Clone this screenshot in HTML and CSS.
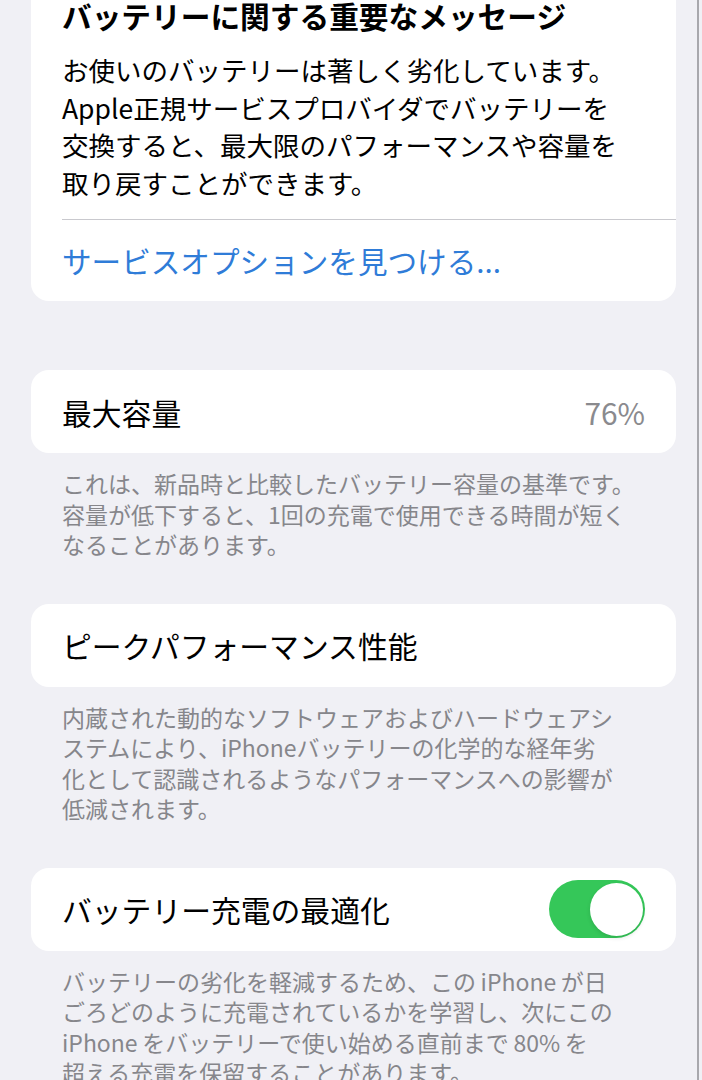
FILE: index.html
```html
<!DOCTYPE html>
<html lang="ja">
<head>
  <meta charset="utf-8">
  <title>バッテリーの状態と充電</title>
  <link rel="stylesheet" href="styles.css">
</head>
<body>
  <div class="screen">
    <div class="card message">
      <h2 class="message-title">バッテリーに関する重要なメッセージ</h2>
      <p class="message-body">お使いのバッテリーは著しく劣化しています。<br>Apple正規サービスプロバイダでバッテリーを<br>交換すると、最大限のパフォーマンスや容量を<br>取り戻すことができます。</p>
      <div class="divider"></div>
      <a class="message-link" href="#">サービスオプションを見つける...</a>
    </div>

    <div class="card row">
      <span class="row-label">最大容量</span>
      <span class="row-value">76%</span>
    </div>
    <p class="footer">これは、新品時と比較したバッテリー容量の基準です。<br>容量が低下すると、1回の充電で使用できる時間が短く<br>なることがあります。</p>

    <div class="card row">
      <span class="row-label">ピークパフォーマンス性能</span>
    </div>
    <p class="footer">内蔵された動的なソフトウェアおよびハードウェアシ<br>ステムにより、iPhoneバッテリーの化学的な経年劣<br>化として認識されるようなパフォーマンスへの影響が<br>低減されます。</p>

    <div class="card row">
      <span class="row-label">バッテリー充電の最適化</span>
      <span class="toggle on"><span class="knob"></span></span>
    </div>
    <p class="footer">バッテリーの劣化を軽減するため、この&thinsp;iPhone&thinsp;が日<br>ごろどのように充電されているかを学習し、次にこの<br>iPhone&thinsp;をバッテリーで使い始める直前まで&thinsp;80%&thinsp;を<br>超える充電を保留することがあります。</p>
  </div>
</body>
</html>
```

FILE: styles.css
```css
body {
  margin: 0;
  background-color: #f0f0f5;
  font-family: "Noto Sans CJK JP", "Noto Sans", sans-serif;
  color: #000000;
  overflow: hidden;
}

.screen {
  width: 699px;
  height: 1080px;
  border-right: 2px solid #a8a8ad;
  box-sizing: border-box;
  overflow: hidden;
}

.card {
  margin-left: 31px;
  width: 645px;
  background-color: #ffffff;
  border-radius: 18px;
  box-sizing: border-box;
}

/* top card, scrolled partly out of view */
.message {
  margin-top: -30px;
  padding: 27px 0 0 31px;
}

.message-title {
  margin: 0;
  font-size: 29.7px;
  font-weight: 700;
  line-height: 37px;
}

.message-body {
  margin: 17px 0 0;
  font-size: 26.5px;
  line-height: 37.5px;
}

.divider {
  margin-top: 18px;
  height: 1px;
  background-color: #c9c9ce;
}

.message-link {
  display: flex;
  align-items: center;
  height: 81px;
  font-size: 29.6px;
  color: #2f7cd8;
  text-decoration: none;
}

.row {
  display: flex;
  align-items: center;
  justify-content: space-between;
  height: 83px;
  padding: 0 31px;
  margin-top: 44px;
}

.message + .row {
  margin-top: 69px;
}

.row-label {
  font-size: 29.8px;
}

.row-value {
  font-size: 29.8px;
  color: #8a8a8e;
}

.toggle {
  display: flex;
  align-items: center;
  justify-content: flex-end;
  width: 96px;
  height: 58px;
  padding: 0 2.5px;
  border-radius: 29px;
  background-color: #e5e5ea;
  box-sizing: border-box;
}

.toggle.on {
  background-color: #35c759;
}

.knob {
  width: 53px;
  height: 53px;
  border-radius: 50%;
  background-color: #ffffff;
  box-shadow: 0 2px 4px rgba(0, 0, 0, 0.12);
}

.footer {
  margin: 0;
  padding: 15px 0 0 62px;
  font-size: 23px;
  line-height: 30.5px;
  color: #86868b;
}
```
